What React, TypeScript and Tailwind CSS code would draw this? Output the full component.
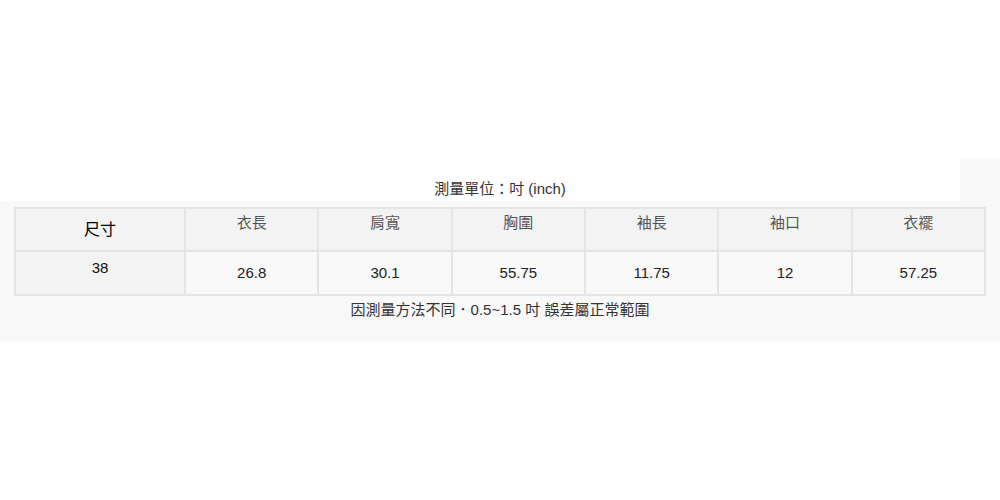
import React from "react";

const heads = ["衣長", "肩寬", "胸圍", "袖長", "袖口", "衣襬"];
const vals = ["26.8", "30.1", "55.75", "11.75", "12", "57.25"];

export default function App() {
  return (
    <div
      className="w-[1000px] h-[500px] bg-white relative"
      style={{ fontFamily: '"Liberation Sans", Arial, "Noto Sans CJK TC", sans-serif' }}
    >
      <div className="h-[159px]" />
      <div className="relative h-[42px] flex items-end justify-center pb-[5px] text-[15px] text-[#333] leading-none">
        <div className="absolute right-0 top-0 w-[40px] h-[42px] bg-[#f8f8f8]" />
        <span className="relative">測量單位：吋 (inch)</span>
      </div>
      <div className="bg-[#f8f8f8] h-[140px] pt-[6px] px-[14px]">
        <div className="grid grid-cols-[170px_repeat(6,1fr)] border-l-2 border-t-2 border-[#e4e4e4] text-[15px]">
          <div className="h-[43px] bg-[#f3f3f3] border-r-2 border-b-2 border-[#e4e4e4] flex items-center justify-center text-black text-[16px]">
            尺寸
          </div>
          {heads.map((h) => (
            <div
              key={h}
              className="h-[43px] bg-[#f3f3f3] border-r-2 border-b-2 border-[#e4e4e4] flex justify-center pt-[3px] text-[#555]"
            >
              {h}
            </div>
          ))}
          <div className="h-[44px] bg-[#f3f3f3] border-r-2 border-b-2 border-[#e4e4e4] flex justify-center pt-[5px] text-[#111]">
            38
          </div>
          {vals.map((v, i) => (
            <div
              key={i}
              className="h-[44px] bg-[#f9f9f9] border-r-2 border-b-2 border-[#e4e4e4] flex items-center justify-center text-[#222]"
            >
              {v}
            </div>
          ))}
        </div>
        <div className="text-center text-[15px] text-[#333] mt-[6px] leading-none">
          因測量方法不同．0.5~1.5 吋 誤差屬正常範圍
        </div>
      </div>
    </div>
  );
}
